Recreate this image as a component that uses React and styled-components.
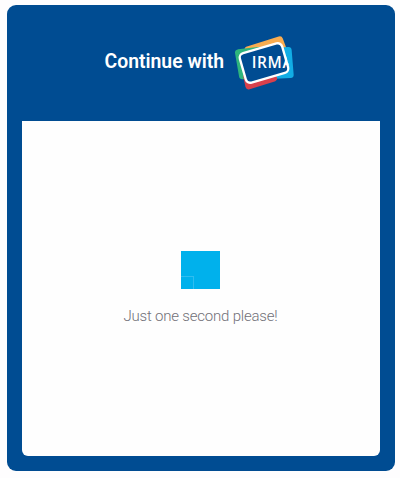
import React from "react";
import styled, { createGlobalStyle } from "styled-components";

const GlobalStyle = createGlobalStyle`
  * { box-sizing: border-box; }
  body { margin: 0; background: #fefdfe; font-family: Roboto, sans-serif; }
`;

const Page = styled.main`
  height: 478px;
  padding: 5px 5px 7px 7px;
`;

const Card = styled.section`
  display: flex;
  flex-direction: column;
  width: 388px;
  height: 466px;
  padding: 0 15px 15px;
  border-radius: 9px;
  background: #004c92;
`;

const Header = styled.header`
  display: flex;
  align-items: center;
  height: 116px;
  padding-left: 82.5px;
  flex: none;
`;

const Title = styled.h1`
  margin: 0;
  width: 120.5px;
  padding-bottom: 2px;
  font-size: 19.4px;
  line-height: 24px;
  font-weight: 600;
  white-space: nowrap;
  color: #fff;
`;

const Logo = styled.svg`
  width: 80px;
  height: 70px;
  flex: none;
`;

const LogoText = styled.text`
  font-family: "Open Sans", sans-serif;
  font-size: 49px;
  font-weight: 600;
  letter-spacing: 2px;
  fill: #fff;
`;

const Content = styled.div`
  display: flex;
  flex: 1;
  flex-direction: column;
  align-items: center;
  width: 358px;
  padding: 130px 1px 0 0;
  border-radius: 0 0 6px 6px;
  background: #fefefe;
`;

const Loader = styled.div`
  display: flex;
  align-items: flex-end;
  width: 39px;
  height: 38px;
  background: #00b1ec;
`;

const LoaderTile = styled.div`
  width: 13px;
  height: 13px;
  border: solid #2fbdf0;
  border-width: 1px 1px 0 0;
`;

const Message = styled.p`
  margin: 16px 0 0;
  font-size: 15px;
  line-height: 22px;
  font-weight: 300;
  letter-spacing: -0.2px;
  color: #717078;
  white-space: nowrap;
`;

function IrmaLogo() {
  return (
    <Logo viewBox="0 0 240 210" role="img" aria-label="IRMA">
      <defs>
        <clipPath id="cardFace">
          <path d="M40 80 170 40 196 127 65 170Z" />
        </clipPath>
      </defs>
      <g strokeWidth="20" strokeLinejoin="round">
        <path d="M69 65 164 35 174 62 80 92Z" fill="#f9ac50" stroke="#f9ac50" />
        <path d="M40 74 100 67 110 140 52 144Z" fill="#2fb57c" stroke="#2fb57c" />
        <path d="M140 70 190 67 196 140 135 143Z" fill="#12ade5" stroke="#12ade5" />
        <path d="M65 146 140 144 146 151 71 174Z" fill="#d8404c" stroke="#d8404c" />
      </g>
      <rect x="-66" y="-46" width="132" height="92" rx="14" transform="translate(117 105) rotate(-16)" fill="#004c92" stroke="#fff" strokeWidth="7" />
      <g clipPath="url(#cardFace)">
        <LogoText transform="translate(80 120) scale(.95 1)">IRMA</LogoText>
      </g>
    </Logo>
  );
}

export default function App() {
  return (
    <>
      <GlobalStyle />
      <Page>
        <Card>
          <Header>
            <Title>Continue with</Title>
            <IrmaLogo />
          </Header>
          <Content>
            <Loader><LoaderTile /></Loader>
            <Message>Just one second please!</Message>
          </Content>
        </Card>
      </Page>
    </>
  );
}
